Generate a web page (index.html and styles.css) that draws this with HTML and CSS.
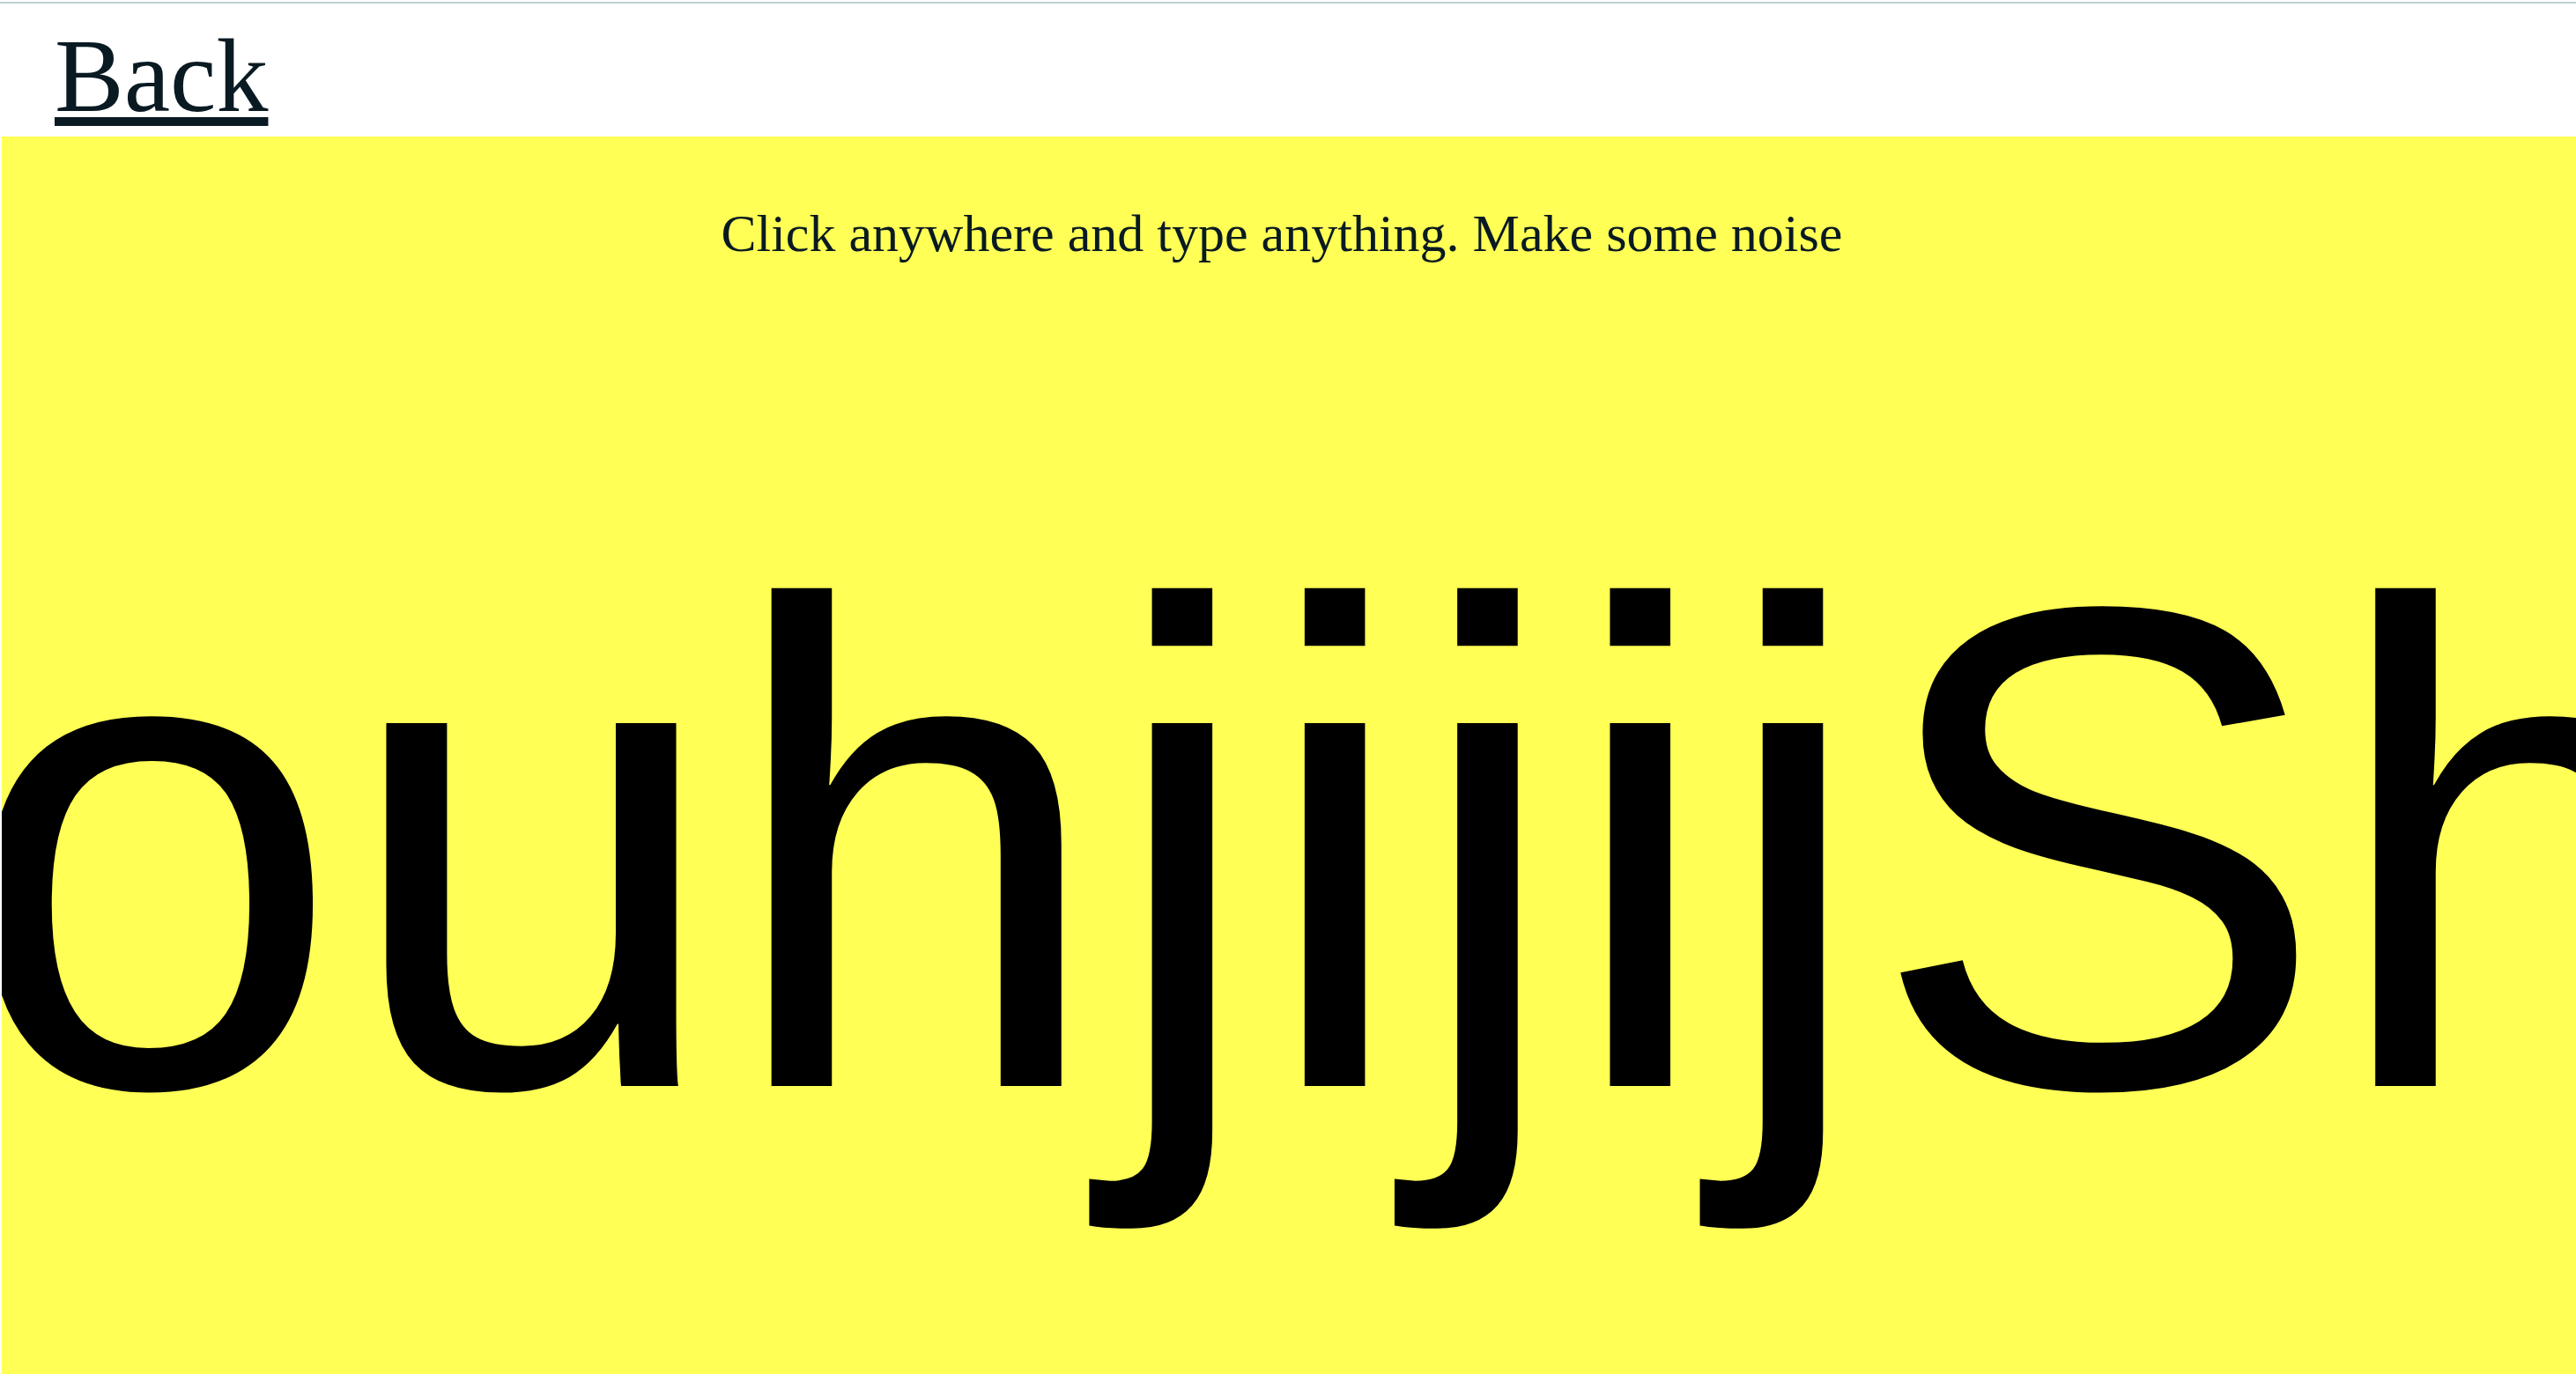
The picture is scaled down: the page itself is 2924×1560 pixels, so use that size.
FILE: index.html
```html
<!DOCTYPE html>
<html lang="en">
<head>
<meta charset="utf-8">
<title>Make some noise</title>
<link rel="stylesheet" href="styles.css">
</head>
<body>
  <div class="topline"></div>
  <header class="header">
    <a class="back" href="#">Back</a>
  </header>
  <main class="stage">
    <p class="prompt">Click anywhere and type anything. Make some noise</p>
    <div class="noise">ouhjijijSh</div>
  </main>
</body>
</html>
```
FILE: styles.css
```css
html, body {
  margin: 0;
  height: 100%;
}

body {
  background: #ffffff;
  overflow: hidden;
}

.topline {
  height: 2px;
  margin-top: 2px;
  background: #bfd2d2;
}

.header {
  box-sizing: border-box;
  height: 151px;
  padding: 15px 0 0 62px;
}

.back {
  font-family: "Liberation Serif", "Times New Roman", serif;
  font-size: 118px;
  line-height: normal;
  color: #0a1a22;
  text-decoration: underline;
  text-decoration-thickness: 10px;
  text-underline-offset: 7px;
  text-decoration-skip-ink: none;
}

.stage {
  margin-left: 2px;
  height: calc(100vh - 155px);
  background: #ffff55;
  overflow: hidden;
}

.prompt {
  margin: 0;
  padding: 76px 16px 0 0;
  font-family: "Liberation Serif", "Times New Roman", serif;
  font-size: 60px;
  line-height: normal;
  text-align: center;
  color: #0a1a22;
}

.noise {
  margin: 273px 0 0 -48px;
  font-family: "Liberation Sans", Arial, sans-serif;
  font-size: 780px;
  line-height: 780px;
  white-space: nowrap;
  color: #000000;
}
```
